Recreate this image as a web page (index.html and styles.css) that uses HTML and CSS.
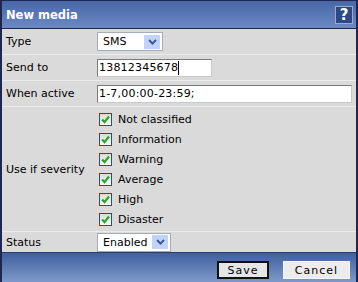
FILE: index.html
```html
<!DOCTYPE html>
<html lang="en">
<head>
    <meta charset="UTF-8">
    <title>New media</title>
    <link rel="stylesheet" href="styles.css">
</head>
<body>
    <div class="dialog">
        <div class="header">
            <span class="title">New media</span>
            <span class="help">?</span>
        </div>

        <div class="row row-type">
            <label>Type</label>
            <div class="select select-type">
                <span>SMS</span>
                <span class="arrow"><svg width="9" height="6" viewBox="0 0 9 6"><path d="M1 1 L4.5 4.5 L8 1" fill="none" stroke="#3f5a8f" stroke-width="2"/></svg></span>
            </div>
        </div>

        <div class="row row-send">
            <label>Send to</label>
            <div class="input input-short">13812345678<span class="caret"></span></div>
        </div>

        <div class="row row-active">
            <label>When active</label>
            <div class="input input-long">1-7,00:00-23:59;</div>
        </div>

        <div class="row row-severity">
            <label>Use if severity</label>
            <div class="checks">
                <div class="check"><span class="box"><svg width="11" height="11" viewBox="0 0 11 11"><path d="M2 5.5 L4.5 8 L9 2.5" fill="none" stroke="#2aa52a" stroke-width="2.2"/></svg></span>Not classified</div>
                <div class="check"><span class="box"><svg width="11" height="11" viewBox="0 0 11 11"><path d="M2 5.5 L4.5 8 L9 2.5" fill="none" stroke="#2aa52a" stroke-width="2.2"/></svg></span>Information</div>
                <div class="check"><span class="box"><svg width="11" height="11" viewBox="0 0 11 11"><path d="M2 5.5 L4.5 8 L9 2.5" fill="none" stroke="#2aa52a" stroke-width="2.2"/></svg></span>Warning</div>
                <div class="check"><span class="box"><svg width="11" height="11" viewBox="0 0 11 11"><path d="M2 5.5 L4.5 8 L9 2.5" fill="none" stroke="#2aa52a" stroke-width="2.2"/></svg></span>Average</div>
                <div class="check"><span class="box"><svg width="11" height="11" viewBox="0 0 11 11"><path d="M2 5.5 L4.5 8 L9 2.5" fill="none" stroke="#2aa52a" stroke-width="2.2"/></svg></span>High</div>
                <div class="check"><span class="box"><svg width="11" height="11" viewBox="0 0 11 11"><path d="M2 5.5 L4.5 8 L9 2.5" fill="none" stroke="#2aa52a" stroke-width="2.2"/></svg></span>Disaster</div>
            </div>
        </div>

        <div class="row row-status">
            <label>Status</label>
            <div class="select select-status">
                <span>Enabled</span>
                <span class="arrow"><svg width="9" height="6" viewBox="0 0 9 6"><path d="M1 1 L4.5 4.5 L8 1" fill="none" stroke="#3f5a8f" stroke-width="2"/></svg></span>
            </div>
        </div>

        <div class="footer">
            <button class="btn btn-save">Save</button>
            <button class="btn btn-cancel">Cancel</button>
        </div>
    </div>
</body>
</html>
```

FILE: styles.css
```css
body {
    margin: 0;
    font-family: "DejaVu Sans", Verdana, sans-serif;
    font-size: 11px;
    color: #000;
    background: #fff;
}

.dialog {
    width: 358px;
    height: 282px;
    box-sizing: border-box;
    border-left: 2px solid #1d2750;
    border-right: 2px solid #1d2750;
    border-top: 1px solid #1d2750;
    background: #dadada;
    display: flex;
    flex-direction: column;
}

.header {
    height: 28px;
    flex-shrink: 0;
    box-sizing: border-box;
    border-bottom: 1px solid #1d2750;
    background: linear-gradient(#4767a8, #6c89c2);
    display: flex;
    align-items: center;
    justify-content: space-between;
    padding: 0 3px 0 4px;
}

.title {
    color: #fff;
    font-weight: bold;
    font-size: 11.5px;
}

.help {
    width: 18px;
    height: 18px;
    box-sizing: border-box;
    border: 1px solid #9aabd0;
    background: #2e4883;
    color: #fff;
    font-weight: bold;
    font-size: 15px;
    line-height: 16px;
    text-align: center;
}

.row {
    display: grid;
    grid-template-columns: 91px 1fr;
    align-items: center;
    padding: 0 4px;
    border-top: 1px solid #ececec;
    flex-shrink: 0;
}

.row-type { height: 25px; border-top: none; }
.row-send { height: 25px; }
.row-active { height: 25px; }
.row-severity { height: 124px; }
.row-status { height: 20px; }

.select {
    height: 19px;
    box-sizing: border-box;
    border: 1px solid #a5acb5;
    background: #fff;
    display: flex;
    align-items: center;
    justify-content: space-between;
    padding: 0 2px 0 5px;
}

.select-type { width: 66px; }
.select-status { width: 74px; }

.arrow {
    width: 16px;
    height: 14px;
    background: #c1d3fb;
    display: flex;
    align-items: center;
    justify-content: center;
}

.input {
    height: 18px;
    box-sizing: border-box;
    border: 1px solid #7a7a7a;
    border-right-color: #c8c8c8;
    border-bottom-color: #c8c8c8;
    background: #fff;
    padding: 0 1px;
    display: flex;
    align-items: center;
    letter-spacing: 0.2px;
}

.input-short { width: 115px; }
.input-long { width: 255px; }

.caret {
    width: 1px;
    height: 14px;
    background: #000;
}

.checks {
    display: flex;
    flex-direction: column;
    gap: 7px;
    padding-left: 2px;
}

.check {
    display: flex;
    align-items: center;
    gap: 6px;
    height: 13px;
}

.box {
    width: 13px;
    height: 13px;
    box-sizing: border-box;
    border: 1px solid #1c5180;
    background: linear-gradient(#dcdcd7, #fbfbf9);
    display: flex;
    align-items: center;
    justify-content: center;
}

.footer {
    flex: 1;
    background: linear-gradient(#3f609d, #7e99c9);
    border-top: 1px solid #2b3d6b;
    display: flex;
    justify-content: flex-end;
    align-items: center;
    gap: 14px;
    padding: 0 6px 0 0;
}

.btn {
    height: 18px;
    box-sizing: border-box;
    font-family: "DejaVu Sans", Verdana, sans-serif;
    font-size: 11px;
    letter-spacing: 1px;
    background: #ececec;
    border: 1px solid #f6f6f6;
    padding: 0;
    margin-top: 5px;
}

.btn-save {
    width: 52px;
    border: 2px solid #111;
    background: #e6e6e6;
}

.btn-cancel { width: 67px; }
```
